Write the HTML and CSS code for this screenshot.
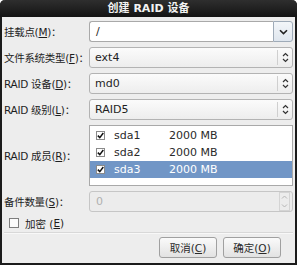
FILE: index.html
```html
<!DOCTYPE html>
<html lang="zh-CN">
<head>
    <meta charset="UTF-8">
    <title>创建 RAID 设备</title>
    <link rel="stylesheet" href="styles.css">
</head>
<body>
    <div class="dialog">
        <div class="titlebar">创建 RAID 设备</div>
        <div class="content">
            <div class="form">
                <label class="lbl">挂载点(<u>M</u>)：</label>
                <div class="combo-entry">
                    <div class="entry">/</div>
                    <div class="drop-btn">
                        <svg width="9" height="6" viewBox="0 0 9 6"><path d="M1 1.2 L4.5 4.6 L8 1.2" fill="none" stroke="#222" stroke-width="1.6"/></svg>
                    </div>
                </div>

                <label class="lbl">文件系统类型(<u>F</u>)：</label>
                <div class="combo"><span>ext4</span><span class="arrows"><svg width="7" height="11" viewBox="0 0 7 11"><path d="M1 4 L3.5 1.5 L6 4 M1 7 L3.5 9.5 L6 7" fill="none" stroke="#333" stroke-width="1.2"/></svg></span></div>

                <label class="lbl">RAID 设备(<u>D</u>)：</label>
                <div class="combo"><span>md0</span><span class="arrows"><svg width="7" height="11" viewBox="0 0 7 11"><path d="M1 4 L3.5 1.5 L6 4 M1 7 L3.5 9.5 L6 7" fill="none" stroke="#333" stroke-width="1.2"/></svg></span></div>

                <label class="lbl">RAID 级别(<u>L</u>)：</label>
                <div class="combo"><span>RAID5</span><span class="arrows"><svg width="7" height="11" viewBox="0 0 7 11"><path d="M1 4 L3.5 1.5 L6 4 M1 7 L3.5 9.5 L6 7" fill="none" stroke="#333" stroke-width="1.2"/></svg></span></div>

                <label class="lbl">RAID 成员(<u>R</u>)：</label>
                <div class="members">
                    <div class="member">
                        <span class="tick"><svg width="7" height="7" viewBox="0 0 7 7"><path d="M0.8 3.6 L2.8 5.6 L6.3 1" fill="none" stroke="#111" stroke-width="1.5"/></svg></span>
                        <span class="dev">sda1</span><span>2000 MB</span>
                    </div>
                    <div class="member">
                        <span class="tick"><svg width="7" height="7" viewBox="0 0 7 7"><path d="M0.8 3.6 L2.8 5.6 L6.3 1" fill="none" stroke="#111" stroke-width="1.5"/></svg></span>
                        <span class="dev">sda2</span><span>2000 MB</span>
                    </div>
                    <div class="member selected">
                        <span class="tick"><svg width="7" height="7" viewBox="0 0 7 7"><path d="M0.8 3.6 L2.8 5.6 L6.3 1" fill="none" stroke="#111" stroke-width="1.5"/></svg></span>
                        <span class="dev">sda3</span><span>2000 MB</span>
                    </div>
                </div>

                <label class="lbl">备件数量(<u>S</u>)：</label>
                <div class="spin">
                    <span>0</span>
                    <span class="spin-btns">
                        <span class="spin-btn"><svg width="7" height="4" viewBox="0 0 7 4"><path d="M1 3.5 L3.5 1 L6 3.5" fill="none" stroke="#b5b5b5" stroke-width="1"/></svg></span>
                        <span class="spin-btn"><svg width="7" height="4" viewBox="0 0 7 4"><path d="M1 0.5 L3.5 3 L6 0.5" fill="none" stroke="#b5b5b5" stroke-width="1"/></svg></span>
                    </span>
                </div>
            </div>

            <label class="check-row"><span class="box"></span>加密 (<u>E</u>)</label>

            <div class="separator"></div>

            <div class="buttons">
                <button type="button" class="btn">取消(<u>C</u>)</button>
                <button type="button" class="btn">确定(<u>O</u>)</button>
            </div>
        </div>
    </div>
</body>
</html>
```

FILE: styles.css
```css
body {
    margin: 0;
    background: #ffffff;
    font-family: "DejaVu Sans", "Noto Sans CJK SC", sans-serif;
    font-size: 11px;
    color: #1e1e1e;
}

.dialog {
    width: 293px;
    height: 263px;
    background: #ededed;
    border: 2px solid #1b1b1b;
    border-top: none;
    border-radius: 5px 5px 0 0;
}

.titlebar {
    height: 17px;
    line-height: 17px;
    margin: 0 -2px;
    background: linear-gradient(#2e2e2e, #141414);
    border-radius: 5px 5px 0 0;
    color: #f2f2f2;
    font-weight: bold;
    text-align: center;
    font-size: 11px;
}

.content {
    padding: 4px 2px 0 2px;
}

.form {
    display: grid;
    grid-template-columns: 85px 204px;
    row-gap: 5px;
    align-items: center;
}

.lbl {
    white-space: nowrap;
    font-size: 10.5px;
    letter-spacing: -0.3px;
}

.combo-entry {
    display: flex;
    height: 21px;
}

.entry {
    flex: 1;
    background: #fff;
    border: 1px solid #a9a9a9;
    border-right: none;
    border-radius: 3px 0 0 3px;
    padding-left: 6px;
    line-height: 19px;
}

.drop-btn {
    width: 18px;
    border: 1px solid #9fabb8;
    border-radius: 0 3px 3px 0;
    background: linear-gradient(#f3f6f9, #dfe6ee);
    display: flex;
    align-items: center;
    justify-content: center;
}

.combo {
    height: 19px;
    display: flex;
    align-items: center;
    justify-content: space-between;
    background: linear-gradient(#fbfbfb, #ededed);
    border: 1px solid #b3b3b3;
    border-radius: 3px;
    padding-left: 5px;
}

.combo .arrows {
    height: 15px;
    width: 14px;
    border-left: 1px solid #cfcfcf;
    display: flex;
    align-items: center;
    justify-content: center;
}

.members {
    height: 58px;
    background: #fff;
    border: 1px solid #a9a9a9;
    padding-top: 1px;
}

.member {
    height: 17px;
    display: flex;
    align-items: center;
    color: #2a2a2a;
}

.member.selected {
    background: #7196c6;
    color: #fff;
}

.tick {
    width: 7px;
    height: 7px;
    margin: 0 9px 0 6px;
    border: 1px solid #8a8a8a;
    background: #fff;
    display: flex;
}

.dev {
    width: 55px;
}

.spin {
    height: 19px;
    display: flex;
    align-items: center;
    justify-content: space-between;
    border: 1px solid #c6c6c6;
    border-radius: 3px;
    background: #ececec;
    color: #b0b0b0;
    padding-left: 6px;
}

.spin-btns {
    width: 9px;
    height: 17px;
    margin-right: 2px;
    display: flex;
    flex-direction: column;
    border: 1px solid #d4d4d4;
}

.spin-btn {
    flex: 1;
    display: flex;
    align-items: center;
    justify-content: center;
}

.check-row {
    display: flex;
    align-items: center;
    margin-top: 5px;
    padding-left: 5px;
    height: 12px;
    font-size: 10.5px;
}

.check-row .box {
    width: 8px;
    height: 8px;
    border: 1px solid #7d7d7d;
    background: #fbfbfb;
    margin-right: 6px;
}

.separator {
    margin-top: 3px;
    border-top: 1px solid #d8d8d8;
    border-bottom: 1px solid #f8f8f8;
}

.buttons {
    display: flex;
    justify-content: flex-end;
    gap: 6px;
    padding: 3px 12px 0 0;
}

.btn {
    width: 58px;
    height: 21px;
    padding: 0;
    font-family: inherit;
    font-size: 10.5px;
    color: #2a2a2a;
    background: linear-gradient(#fafafa, #e2e2e2);
    border: 1px solid #a0a0a0;
    border-radius: 3px;
}
```
